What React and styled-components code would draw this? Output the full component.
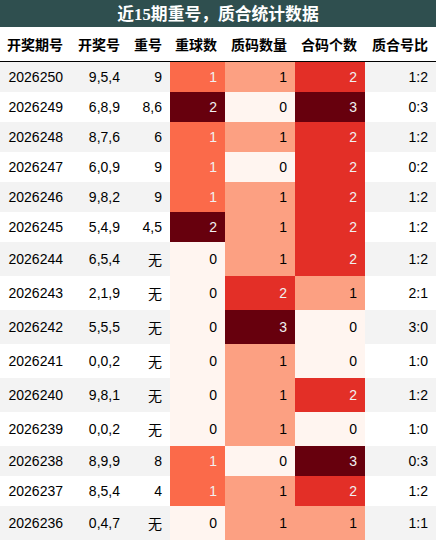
import React from 'react';
import styled, { createGlobalStyle } from 'styled-components';

const GlobalStyle = createGlobalStyle`
  html, body {
    margin: 0;
    padding: 0;
    background: #ffffff;
  }
`;

// matplotlib "Reds" picks for the value ranges used here
const heat = {
  low: '#fff5f0',
  third: '#fca082',
  half: '#fb6a4a',
  twoThird: '#e32f27',
  high: '#67000d',
};

const columns = [
  { key: 'issue', label: '开奖期号', width: 71 },
  { key: 'draw', label: '开奖号', width: 57 },
  { key: 'repeat', label: '重号', width: 42 },
  { key: 'repeatCount', label: '重球数', width: 55 },
  { key: 'prime', label: '质码数量', width: 70 },
  { key: 'composite', label: '合码个数', width: 70 },
  { key: 'ratio', label: '质合号比', width: 71 },
];

const rows = [
  ['2026250', '9,5,4', '9', 1, 1, 2, '1:2'],
  ['2026249', '6,8,9', '8,6', 2, 0, 3, '0:3'],
  ['2026248', '8,7,6', '6', 1, 1, 2, '1:2'],
  ['2026247', '6,0,9', '9', 1, 0, 2, '0:2'],
  ['2026246', '9,8,2', '9', 1, 1, 2, '1:2'],
  ['2026245', '5,4,9', '4,5', 2, 1, 2, '1:2'],
  ['2026244', '6,5,4', '无', 0, 1, 2, '1:2'],
  ['2026243', '2,1,9', '无', 0, 2, 1, '2:1'],
  ['2026242', '5,5,5', '无', 0, 3, 0, '3:0'],
  ['2026241', '0,0,2', '无', 0, 1, 0, '1:0'],
  ['2026240', '9,8,1', '无', 0, 1, 2, '1:2'],
  ['2026239', '0,0,2', '无', 0, 1, 0, '1:0'],
  ['2026238', '8,9,9', '8', 1, 0, 3, '0:3'],
  ['2026237', '8,5,4', '4', 1, 1, 2, '1:2'],
  ['2026236', '0,4,7', '无', 0, 1, 1, '1:1'],
];

const repeatShade = (v) => (v === 0 ? heat.low : v === 1 ? heat.half : heat.high);
const countShade = (v) =>
  v === 0 ? heat.low : v === 1 ? heat.third : v === 2 ? heat.twoThird : heat.high;
const isDark = (bg) => bg === heat.half || bg === heat.twoThird || bg === heat.high;

const Table = styled.table`
  width: 436px;
  border-collapse: collapse;
  table-layout: fixed;
  font-family: "Liberation Sans", "Noto Sans CJK SC", sans-serif;
  font-size: 14px;
  color: #000000;
`;

const Caption = styled.caption`
  background: #2f4f4f;
  color: #ffffff;
  font-family: "Liberation Serif", "Noto Sans CJK SC", serif;
  font-weight: bold;
  font-size: 16.8px;
  text-align: center;
  padding: 1px 0 2px;
`;

const HeadCell = styled.th`
  font-weight: bold;
  text-align: right;
  padding: 7px 8px 7px 0;
  border-bottom: 1px solid #000000;
  white-space: nowrap;
`;

const Row = styled.tr`
  background: ${(p) => (p.$striped ? '#f3f3f3' : '#ffffff')};
`;

const Cell = styled.td`
  text-align: right;
  padding: 7px 8px 7px 0;
  white-space: nowrap;
  background: ${(p) => p.$bg || 'transparent'};
  color: ${(p) => (p.$bg && isDark(p.$bg) ? '#f1f1f1' : '#000000')};
`;

export default function App() {
  return (
    <>
      <GlobalStyle />
      <Table>
        <Caption>近15期重号，质合统计数据</Caption>
        <colgroup>
          {columns.map((c) => (
            <col key={c.key} style={{ width: c.width }} />
          ))}
        </colgroup>
        <thead>
          <tr>
            {columns.map((c) => (
              <HeadCell key={c.key}>{c.label}</HeadCell>
            ))}
          </tr>
        </thead>
        <tbody>
          {rows.map((r, i) => (
            <Row key={r[0]} $striped={i % 2 === 0}>
              <Cell>{r[0]}</Cell>
              <Cell>{r[1]}</Cell>
              <Cell>{r[2]}</Cell>
              <Cell $bg={repeatShade(r[3])}>{r[3]}</Cell>
              <Cell $bg={countShade(r[4])}>{r[4]}</Cell>
              <Cell $bg={countShade(r[5])}>{r[5]}</Cell>
              <Cell>{r[6]}</Cell>
            </Row>
          ))}
        </tbody>
      </Table>
    </>
  );
}
